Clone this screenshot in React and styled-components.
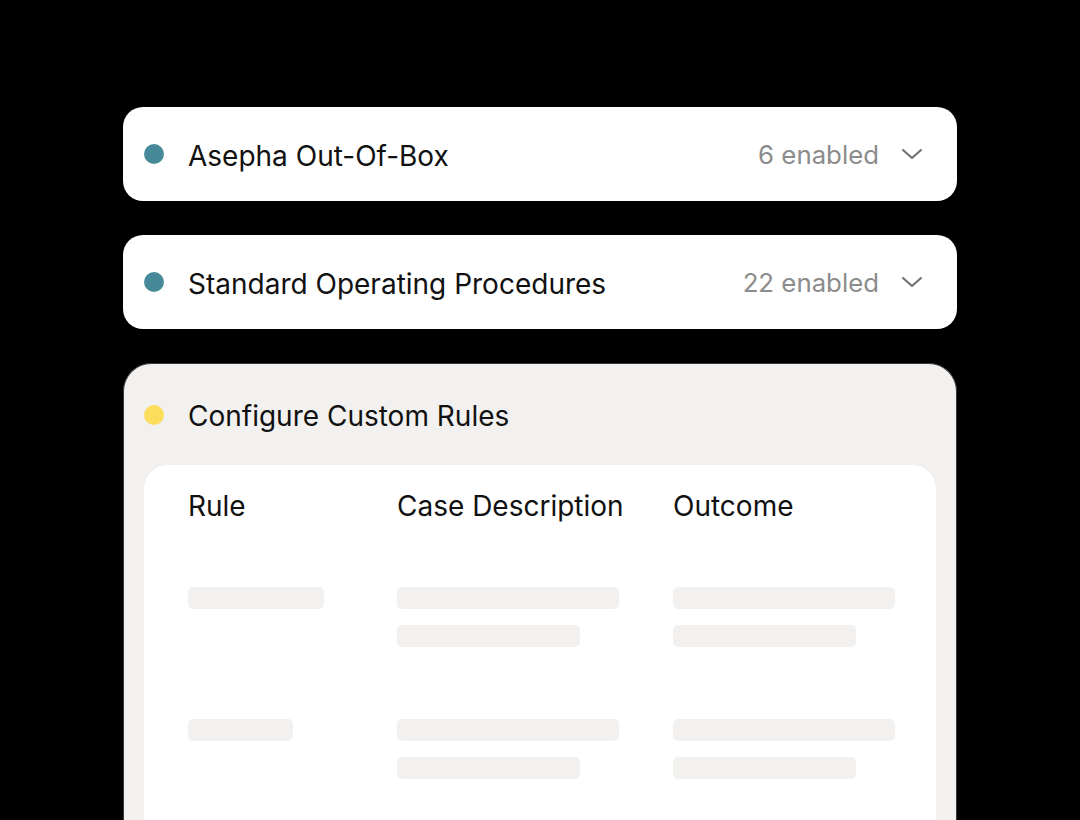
import React from 'react';
import styled, { createGlobalStyle } from 'styled-components';

const GlobalStyle = createGlobalStyle`
  html, body {
    margin: 0;
    padding: 0;
    background: #000;
  }
  body {
    font-family: Inter, "Noto Sans", sans-serif;
    color: #111;
  }
`;

const Page = styled.div`
  width: 1080px;
  height: 820px;
  overflow: hidden;
  box-sizing: border-box;
  padding: 107px 123px 0;
  display: flex;
  flex-direction: column;
  gap: 34px;
`;

const Card = styled.div`
  height: 94px;
  background: #fff;
  border-radius: 20px;
  display: flex;
  align-items: center;
  padding: 0 34px 0 21px;
  box-sizing: border-box;
`;

const Dot = styled.span`
  width: 20px;
  height: 20px;
  border-radius: 50%;
  background: ${(p) => p.color};
  flex-shrink: 0;
  margin-right: 24px;
`;

const Title = styled.div`
  font-size: 28px;
  flex: 1;
  padding-top: 3px;
`;

const Count = styled.div`
  font-size: 25.8px;
  color: #8c8c8c;
  margin-right: 22px;
`;

const Chevron = () => (
  <svg width="22" height="12" viewBox="0 0 22 12" fill="none">
    <path d="M2 2l9 8 9-8" stroke="#6f6f6f" strokeWidth="2" strokeLinecap="round" strokeLinejoin="round" />
  </svg>
);

const CustomCard = styled.div`
  flex: 1;
  background: #f2f1ef;
  border: 1px solid #3a3a3a;
  border-bottom: none;
  border-radius: 28px 28px 0 0;
  padding: 0 20px;
  display: flex;
  flex-direction: column;
`;

const CustomHeader = styled.div`
  height: 101px;
  display: flex;
  align-items: center;
`;

const Panel = styled.div`
  flex: 1;
  background: #fff;
  border-radius: 24px 24px 0 0;
  padding: 20px 41px 0 44px;
`;

const Grid = styled.div`
  display: grid;
  grid-template-columns: 209px 276px 1fr;
`;

const HeadCell = styled.div`
  font-size: 28px;
  height: 42px;
  line-height: 42px;
`;

const Cell = styled.div`
  display: flex;
  flex-direction: column;
  gap: 16px;
  padding-top: ${(p) => p.top}px;
`;

const Bar = styled.div`
  height: 22px;
  width: ${(p) => p.w}px;
  background: #f2f1ef;
  border-radius: 5px;
`;

const rows = [
  { top: 60, rule: 136 },
  { top: 72, rule: 105 },
];

export default function App() {
  return (
    <>
      <GlobalStyle />
      <Page>
        <Card>
          <Dot color="#468a99" />
          <Title>Asepha Out-Of-Box</Title>
          <Count>6 enabled</Count>
          <Chevron />
        </Card>
        <Card>
          <Dot color="#468a99" />
          <Title>Standard Operating Procedures</Title>
          <Count>22 enabled</Count>
          <Chevron />
        </Card>
        <CustomCard>
          <CustomHeader>
            <Dot color="#fddd5c" />
            <Title>Configure Custom Rules</Title>
          </CustomHeader>
          <Panel>
            <Grid>
              <HeadCell>Rule</HeadCell>
              <HeadCell>Case Description</HeadCell>
              <HeadCell>Outcome</HeadCell>
              {rows.map((r, i) => (
                <React.Fragment key={i}>
                  <Cell top={r.top}>
                    <Bar w={r.rule} />
                  </Cell>
                  <Cell top={r.top}>
                    <Bar w={222} />
                    <Bar w={183} />
                  </Cell>
                  <Cell top={r.top}>
                    <Bar w={222} />
                    <Bar w={183} />
                  </Cell>
                </React.Fragment>
              ))}
            </Grid>
          </Panel>
        </CustomCard>
      </Page>
    </>
  );
}
